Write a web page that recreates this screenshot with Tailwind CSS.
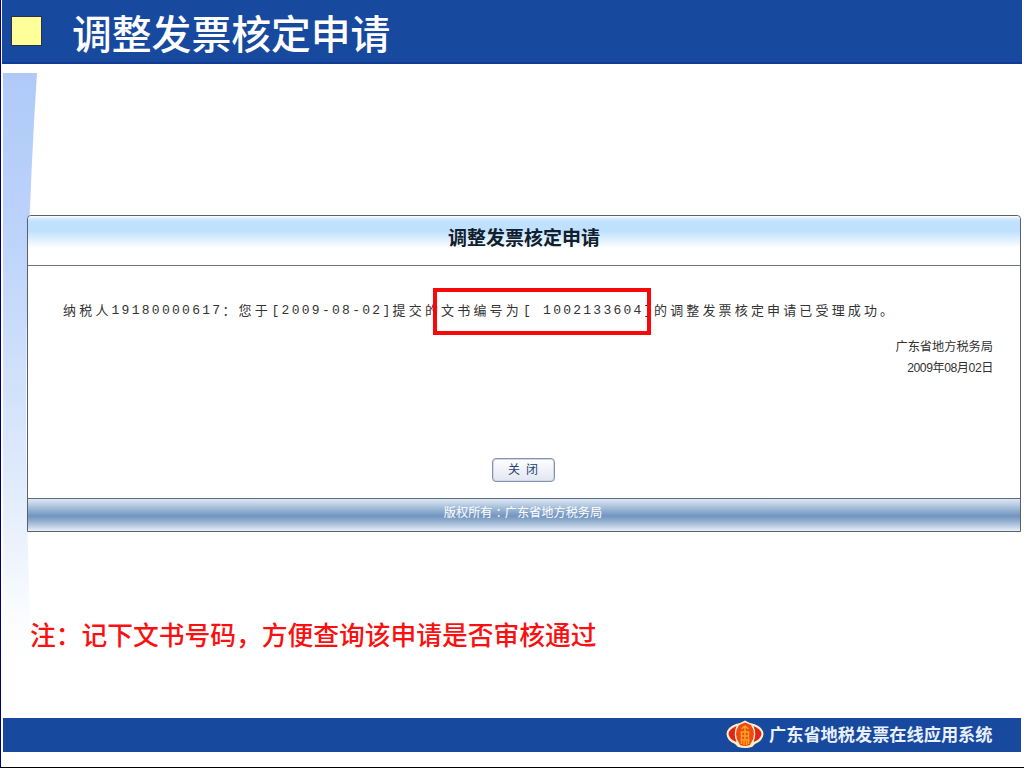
<!DOCTYPE html>
<html lang="zh-CN">
<head>
<meta charset="utf-8">
<title>调整发票核定申请</title>
<script src="https://cdn.jsdelivr.net/npm/@tailwindcss/browser@4"></script>
</head>
<body class="bg-white">
<div class="relative flex h-[768px] w-[1024px] flex-col overflow-hidden border-b border-l border-b-black border-l-[#000080] bg-white pl-px font-['Liberation_Sans','Noto_Sans_CJK_SC',sans-serif] whitespace-nowrap">
  <svg class="absolute top-[73px] left-[2px]" width="38" height="590" viewBox="0 0 38 590">
    <defs><linearGradient id="side" x1="0" y1="0" x2="0" y2="1">
      <stop offset="0" stop-color="#afcaf9"/><stop offset=".25" stop-color="#bbd2fb"/><stop offset=".7" stop-color="#e0ebfc"/><stop offset=".92" stop-color="#fafcff"/><stop offset="1" stop-color="#ffffff"/>
    </linearGradient></defs>
    <path d="M0 0H34Q15 290 29 590H0Z" fill="url(#side)"/>
  </svg>

  <header class="flex h-16 w-[1020px] shrink-0 items-center border-b-2 border-[#123a9a] bg-[#17499f] pl-[9px]">
    <div class="h-[30px] w-[31px] border border-[#28324a] bg-[#ffff99]"></div>
    <h1 class="ml-[30px] pt-[7px] text-[39.8px] leading-[60px] font-medium text-white">调整发票核定申请</h1>
  </header>

  <main class="relative mt-[151px] ml-[25px] flex h-[317px] w-[994px] shrink-0 flex-col rounded-t border border-[#59616b] bg-white">
    <div class="flex h-[50px] justify-center rounded-t border-b border-[#70757b] bg-[linear-gradient(to_bottom,#fff_0px,#d4e7fa_3px,#bfe1fe_6px,#bfe1fe_15px,#fff_32px)]">
      <h2 class="pt-[9px] text-[19px] leading-7 font-bold text-[#10202c]">调整发票核定申请</h2>
    </div>
    <p class="flex h-[89px] items-center pl-[35px] text-[13px] text-[#333]">
      <span class="w-[48.5px] tracking-[3.2px]">纳税人</span><span class="w-[111px] font-['Liberation_Mono'] tracking-[2.28px]">19180000617</span><span class="w-4">：</span><span class="w-[33px] tracking-[3.2px]">您于</span><span class="w-[121px] font-['Liberation_Mono'] tracking-[2.28px]">[2009-08-02]</span><span class="w-[48.5px] tracking-[3.2px]">提交的</span><span class="w-[82px] tracking-[3.2px]">文书编号为</span><span class="w-[131px] font-['Liberation_Mono'] tracking-[2.25px] whitespace-pre">[ 1002133604]</span><span class="tracking-[3.15px]">的调整发票核定申请已受理成功。</span>
    </p>
    <div class="-mt-[18px] flex h-[42px] flex-col items-end pr-[27px] text-[12.2px] leading-[21px] text-[#333]">
      <span>广东省地方税务局</span>
      <span class="tracking-[-0.45px]">2009年08月02日</span>
    </div>
    <div class="mt-[79px] flex justify-center pr-0.5">
      <button class="h-6 w-[63px] rounded border border-[#8791ad] bg-linear-to-b from-white to-[#e1e6f2] text-[12px] leading-5 tracking-[6px] text-[#273f70] shadow-[inset_0_0_0_1px_#d1d6e5]"><span class="pl-1.5">关闭</span></button>
    </div>
    <footer class="mt-auto flex h-[33px] justify-center border-t border-[#5c6c85] bg-[linear-gradient(to_bottom,#dce7f3_0px,#bed0e4_5px,#8aa8cb_13px,#7194bf_17px,#92aece_22px,#c3d4e7_28px,#e9f1f8_32px)] pt-1 pr-0.5 text-[12.2px] leading-[20px] text-white"><span>版权所有</span><span lang="zh-TW" class="font-['Noto_Sans_CJK_TC',sans-serif]">：</span><span>广东省地方税务局</span></footer>
    <div class="absolute top-[72px] left-[405px] h-[47px] w-[218px] border-[4.5px] border-[#f80808]"></div>
  </main>

  <p class="relative mt-[84px] ml-[28px] h-10 shrink-0 text-[25.75px] leading-10 font-medium text-[#fa1010]">注：记下文书号码，方便查询该申请是否审核通过</p>

  <footer class="absolute top-[718px] left-[2px] flex h-[34px] w-[1018px] items-center bg-[#17499f] pl-[723px] text-white">
    <svg width="38" height="30" viewBox="0 0 38 30">
      <path d="M10 4L14 3L19 .5L24 3L28 4Q37 7 37.5 14Q37 21 29 24L26 27Q19 29 12 27L9 24Q1 21 .5 14Q1 7 10 4Z" fill="#fff0c4"/>
      <path d="M10.500 6Q3 9 2.500 14Q3 19 10.500 22Q7 14 10.500 6ZM27.500 6Q35 9 35.500 14Q35 19 27.500 22Q31 14 27.500 6Z" fill="#e0261a"/>
      <path d="M13 5L19 2.500L25 5Q31 14 25 23L24 25Q19 27 14 25L13 23Q7 14 13 5Z" fill="#ee4a17"/>
      <path d="M15.500 9L19 6L22.500 9M14.500 12H23.500M19 6V20M15 16H23M14.500 20H23.500M15.500 12V24M22.500 12V24M18 21V25M20.500 21V25" fill="none" stroke="#fba51d" stroke-width="1.5"/>
    </svg>
    <span class="ml-[5px] text-[17.2px] leading-8 font-bold text-[#e9effb]">广东省地税发票在线应用系统</span>
  </footer>
</div>
</body>
</html>
